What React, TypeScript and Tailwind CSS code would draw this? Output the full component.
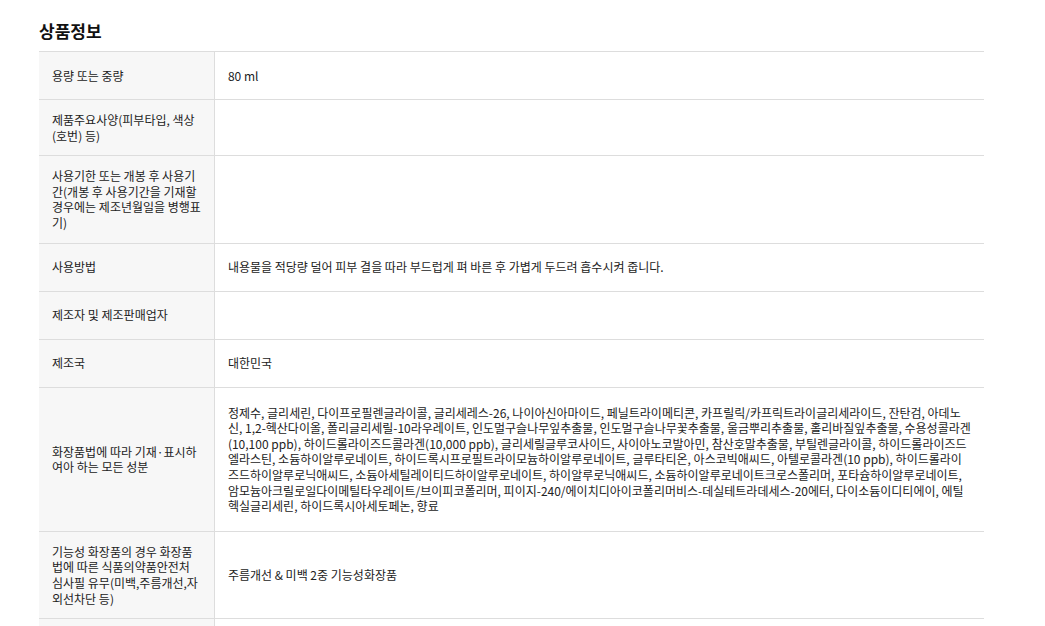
import React from "react";

type Row = {
  label: string[];
  value?: string[];
  tall?: boolean;
};

const rows: Row[] = [
  { label: ["용량 또는 중량"], value: ["80 ml"] },
  { label: ["제품주요사양(피부타입, 색상", "(호번) 등)"] },
  {
    label: [
      "사용기한 또는 개봉 후 사용기",
      "간(개봉 후 사용기간을 기재할",
      "경우에는 제조년월일을 병행표",
      "기)",
    ],
  },
  {
    label: ["사용방법"],
    value: [
      "내용물을 적당량 덜어 피부 결을 따라 부드럽게 펴 바른 후 가볍게 두드려 흡수시켜 줍니다.",
    ],
  },
  { label: ["제조자 및 제조판매업자"] },
  { label: ["제조국"], value: ["대한민국"] },
  {
    label: ["화장품법에 따라 기재·표시하", "여아 하는 모든 성분"],
    tall: true,
    value: [
      "정제수, 글리세린, 다이프로필렌글라이콜, 글리세레스-26, 나이아신아마이드, 페닐트라이메티콘, 카프릴릭/카프릭트라이글리세라이드, 잔탄검, 아데노",
      "신, 1,2-헥산다이올, 폴리글리세릴-10라우레이트, 인도멀구슬나무잎추출물, 인도멀구슬나무꽃추출물, 울금뿌리추출물, 홀리바질잎추출물, 수용성콜라겐",
      "(10,100 ppb), 하이드롤라이즈드콜라겐(10,000 ppb), 글리세릴글루코사이드, 사이아노코발아민, 참산호말추출물, 부틸렌글라이콜, 하이드롤라이즈드",
      "엘라스틴, 소듐하이알루로네이트, 하이드록시프로필트라이모늄하이알루로네이트, 글루타티온, 아스코빅애씨드, 아텔로콜라겐(10 ppb), 하이드롤라이",
      "즈드하이알루로닉애씨드, 소듐아세틸레이티드하이알루로네이트, 하이알루로닉애씨드, 소듐하이알루로네이트크로스폴리머, 포타슘하이알루로네이트,",
      "암모늄아크릴로일다이메틸타우레이트/브이피코폴리머, 피이지-240/에이치디아이코폴리머비스-데실테트라데세스-20에터, 다이소듐이디티에이, 에틸",
      "헥실글리세린, 하이드록시아세토페논, 향료",
    ],
  },
  {
    label: [
      "기능성 화장품의 경우 화장품",
      "법에 따른 식품의약품안전처",
      "심사필 유무(미백,주름개선,자",
      "외선차단 등)",
    ],
    value: ["주름개선 & 미백 2중 기능성화장품"],
  },
  // next row only peeks in at the bottom edge
  { label: [] },
];

function Lines({ lines }: { lines: string[] }) {
  return (
    <>
      {lines.map((l, i) => (
        <span key={i} className="block whitespace-nowrap">
          {l}
        </span>
      ))}
    </>
  );
}

export default function App() {
  return (
    <div
      className="h-[626px] overflow-hidden bg-white pl-[39px] pt-[18px] text-[#222]"
      style={{ fontFamily: '"Noto Sans CJK KR", "Noto Sans", sans-serif' }}
    >
      <h2 className="mb-[7px] text-[17px] font-bold leading-[26px] text-[#111]">
        상품정보
      </h2>

      <table className="w-[943px] border-collapse text-[12px] leading-[15.6px]">
        <tbody>
          {rows.map((row, i) => (
            <tr key={i} className="border-y border-[#dddddd]">
              <td className="h-[48px] w-[175px] border-r border-[#dddddd] bg-[#f7f7f7] px-[13px] py-3 align-middle">
                <Lines lines={row.label} />
              </td>
              <td
                className={`px-[13px] align-middle ${
                  row.tall ? "py-[17px]" : "py-3"
                }`}
              >
                {row.value && <Lines lines={row.value} />}
              </td>
            </tr>
          ))}
        </tbody>
      </table>
    </div>
  );
}
